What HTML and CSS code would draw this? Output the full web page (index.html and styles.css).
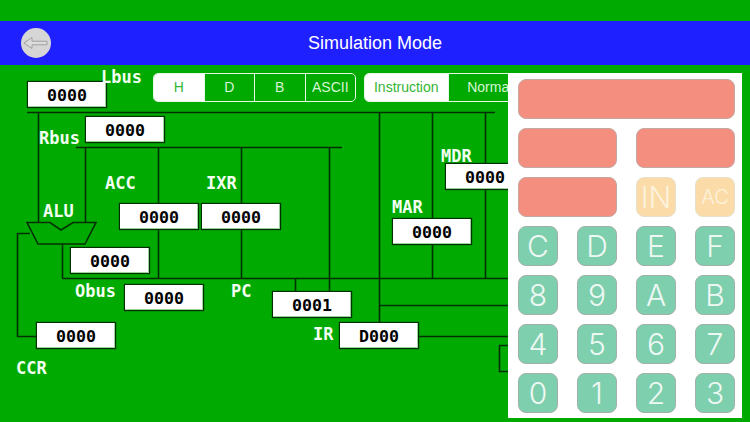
FILE: index.html
```html
<!DOCTYPE html>
<html lang="en">
<head>
    <meta charset="UTF-8" />
    <title>Simulation Mode</title>
    <link rel="stylesheet" href="styles.css">
</head>
<body>

<div class="app">
    <div class="status-strip"></div>

    <header class="nav-bar">
        <button class="back-button" aria-label="Back">
            <svg width="30" height="30" viewBox="0 0 30 30">
                <path d="M3 15 L11 9.5 V13.2 H26 V16.8 H11 V20.5 Z" fill="#dcdcdc" stroke="#a0a0a0" stroke-width="1"/>
            </svg>
        </button>
        <div class="nav-title">Simulation Mode</div>
    </header>

    <main class="board">
        <!-- wires use page coordinates, the viewBox skips the header -->
        <svg class="wires" width="750" height="357" viewBox="0 65 750 357">
            <g fill="none" stroke="#033003" stroke-width="1.6">
                <path d="M27 112.5 H495"/>
                <path d="M76 147.5 H342"/>
                <path d="M62 278.5 H508"/>
                <path d="M379 305.5 H508"/>
                <path d="M419 336.5 H508"/>
                <path d="M38.5 112 V222"/>
                <path d="M85.5 147 V222"/>
                <path d="M158.5 147 V278"/>
                <path d="M241.5 147 V278"/>
                <path d="M329.5 147 V292"/>
                <path d="M295.5 278 V292"/>
                <path d="M379.5 112 V322"/>
                <path d="M432.5 112 V278"/>
                <path d="M485.5 112 V278"/>
                <path d="M62.5 244 V278"/>
                <path d="M30 233.5 H17.5 V336.5 H37"/>
                <path d="M508 345.5 H499.5 V371.5 H508"/>
                <path d="M27 222.5 H50 L61 230 L73 222.5 H96 L85 244 H38 Z"/>
            </g>
        </svg>

        <span class="bus-label label-lbus">Lbus</span>
        <span class="bus-label label-rbus">Rbus</span>
        <span class="bus-label label-acc">ACC</span>
        <span class="bus-label label-ixr">IXR</span>
        <span class="bus-label label-alu">ALU</span>
        <span class="bus-label label-obus">Obus</span>
        <span class="bus-label label-pc">PC</span>
        <span class="bus-label label-ir">IR</span>
        <span class="bus-label label-ccr">CCR</span>
        <span class="bus-label label-mar">MAR</span>
        <span class="bus-label label-mdr">MDR</span>

        <div class="reg reg-lbus">0000</div>
        <div class="reg reg-rbus">0000</div>
        <div class="reg reg-acc">0000</div>
        <div class="reg reg-ixr">0000</div>
        <div class="reg reg-alu">0000</div>
        <div class="reg reg-obus">0000</div>
        <div class="reg reg-pc">0001</div>
        <div class="reg reg-ir">D000</div>
        <div class="reg reg-ccr">0000</div>
        <div class="reg reg-mar">0000</div>
        <div class="reg reg-mdr">0000</div>

        <div class="toolbar">
            <div class="segments segments-base">
                <div class="segment active">H</div>
                <div class="segment">D</div>
                <div class="segment">B</div>
                <div class="segment">ASCII</div>
            </div>
            <div class="segments segments-mode">
                <div class="segment active">Instruction</div>
                <div class="segment">Normal</div>
            </div>
        </div>

        <div class="keypad">
            <div class="key key-red key-wide"></div>
            <div class="key key-red key-half"></div>
            <div class="key key-red key-half"></div>
            <div class="key key-red key-half"></div>
            <div class="key key-cream">IN</div>
            <div class="key key-cream key-small">AC</div>
            <div class="key key-hex">C</div>
            <div class="key key-hex">D</div>
            <div class="key key-hex">E</div>
            <div class="key key-hex">F</div>
            <div class="key key-hex">8</div>
            <div class="key key-hex">9</div>
            <div class="key key-hex">A</div>
            <div class="key key-hex">B</div>
            <div class="key key-hex">4</div>
            <div class="key key-hex">5</div>
            <div class="key key-hex">6</div>
            <div class="key key-hex">7</div>
            <div class="key key-hex">0</div>
            <div class="key key-hex">1</div>
            <div class="key key-hex">2</div>
            <div class="key key-hex">3</div>
        </div>
    </main>
</div>

</body>
</html>
```

FILE: styles.css
```css
body, html {
    margin: 0;
    padding: 0;
    background: #00aa00;
    overflow: hidden;
    font-family: 'Liberation Sans', sans-serif;
}

.app {
    display: flex;
    flex-direction: column;
    width: 750px;
    height: 422px;
}

.status-strip {
    height: 21px;
}

.nav-bar {
    display: flex;
    align-items: center;
    justify-content: center;
    position: relative;
    height: 44px;
    background: #1f20ff;
}

.back-button {
    position: absolute;
    left: 21px;
    top: 7px;
    width: 30px;
    height: 30px;
    padding: 0;
    border: none;
    border-radius: 50%;
    background: #d6d6d6;
}

.back-button svg {
    display: block;
}

.nav-title {
    color: #fff;
    font-size: 18px;
}

.board {
    position: relative;
    flex: 1;
    overflow: hidden;
}

.wires {
    position: absolute;
    left: 0;
    top: 0;
}

/* registers */
.reg {
    position: absolute;
    box-sizing: border-box;
    width: 80px;
    height: 27px;
    background: #fff;
    border: 1px solid #033003;
    box-shadow: 0 0 1px #033003, inset -1px -1px 0 #9ad49a;
    color: #000;
    font-family: 'DejaVu Sans Mono', monospace;
    font-weight: bold;
    font-size: 16.6px;
    line-height: 27px;
    text-align: center;
}

.reg-lbus { left: 27px; top: 16px; }
.reg-rbus { left: 85px; top: 51px; }
.reg-acc { left: 119px; top: 138px; }
.reg-ixr { left: 201px; top: 138px; }
.reg-alu { left: 70px; top: 182px; }
.reg-obus { left: 124px; top: 219px; }
.reg-pc { left: 272px; top: 226px; }
.reg-ir { left: 339px; top: 257px; }
.reg-ccr { left: 36px; top: 257px; }
.reg-mar { left: 392px; top: 153px; }
.reg-mdr { left: 445px; top: 98px; }

/* labels */
.bus-label {
    position: absolute;
    z-index: 2;
    color: #f2fff2;
    font-family: 'DejaVu Sans Mono', monospace;
    font-weight: bold;
    font-size: 17px;
    line-height: 20px;
}

.label-lbus { left: 101px; top: 2px; }
.label-rbus { left: 39px; top: 63px; }
.label-acc { left: 105px; top: 108px; }
.label-ixr { left: 206px; top: 108px; }
.label-alu { left: 43px; top: 136px; }
.label-obus { left: 75px; top: 216px; }
.label-pc { left: 231px; top: 216px; }
.label-ir { left: 313px; top: 259px; }
.label-ccr { left: 16px; top: 293px; }
.label-mar { left: 392px; top: 132px; }
.label-mdr { left: 441px; top: 81px; }

/* segmented controls */
.toolbar {
    position: absolute;
    left: 153px;
    top: 8px;
    display: flex;
    gap: 8px;
}

.segments {
    display: flex;
    box-sizing: border-box;
    height: 29px;
    border: 1px solid #e6f7e6;
    border-radius: 5px;
    overflow: hidden;
}

.segments-base {
    width: 203px;
}

.segments-mode {
    width: 168px;
}

.segment {
    flex: 1 1 0;
    box-sizing: border-box;
    color: #d8f5d8;
    font-size: 14px;
    line-height: 27px;
    text-align: center;
    border-left: 1px solid #e6f7e6;
}

.segment:first-child {
    border-left: none;
}

.segment.active {
    background: #fff;
    color: #35b535;
}

/* keypad panel */
.keypad {
    position: absolute;
    left: 508px;
    top: 8px;
    z-index: 3;
    box-sizing: border-box;
    width: 234px;
    height: 345px;
    padding: 6px 7px 6px 10px;
    background: #fff;
    display: grid;
    grid-template-columns: repeat(4, 40px);
    grid-auto-rows: 40px;
    column-gap: 19px;
    row-gap: 9px;
}

.key {
    box-sizing: border-box;
    border: 1px solid #adadaa;
    border-radius: 8px;
    color: #eef8f3;
    font-family: Inter, 'Liberation Sans', sans-serif;
    font-weight: 300;
    font-size: 30px;
    line-height: 38px;
    text-align: center;
}

.key-red {
    background: #f48f80;
    border-color: #c4a8a2;
}

.key-wide {
    grid-column: span 4;
}

.key-half {
    grid-column: span 2;
}

.key-cream {
    background: #fbdca8;
    border-color: #e6e0cc;
    color: #fdf2dc;
}

.key-small {
    font-size: 20px;
}

.key-hex {
    background: #7dcfae;
    border-color: #a3b0a9;
}
```
